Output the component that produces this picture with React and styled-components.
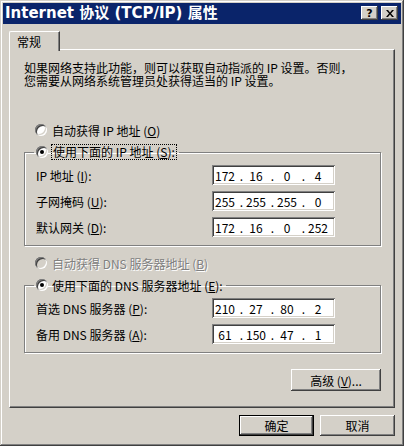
import styled, { createGlobalStyle } from "styled-components";

const GlobalStyle = createGlobalStyle`
    html, body {
        margin: 0;
        padding: 0;
        background: #D4D0C8;
    }
    body {
        font-family: "Noto Sans CJK SC", "Noto Sans", sans-serif;
        font-size: 12px;
        color: #000000;
    }
`

const ipRows = [
    { label: "IP 地址", key: "I", value: ["172", "16", "0", "4"] },
    { label: "子网掩码", key: "U", value: ["255", "255", "255", "0"] },
    { label: "默认网关", key: "D", value: ["172", "16", "0", "252"] },
]

const dnsRows = [
    { label: "首选 DNS 服务器", key: "P", value: ["210", "27", "80", "2"] },
    { label: "备用 DNS 服务器", key: "A", value: ["61", "150", "47", "1"] },
]

function IpField({ value }) {
    return (
        <IpBox>
            {value.map((part, i) => (
                <IpPart key={i}>
                    {i > 0 && <Dot>.</Dot>}
                    <Octet>{part}</Octet>
                </IpPart>
            ))}
        </IpBox>
    )
}

function FieldRows({ rows }) {
    return (
        <Rows>
            {rows.map((row) => (
                <Row key={row.key}>
                    <Label>{row.label} (<u>{row.key}</u>):</Label>
                    <IpField value={row.value} />
                </Row>
            ))}
        </Rows>
    )
}

export default function App() {
    return (
        <>
            <GlobalStyle />
            <Window>
                <TitleBar>
                    <Title>Internet 协议 (TCP/IP) 属性</Title>
                    <Caption>
                        <CapButton>?</CapButton>
                        <CapButton>
                            <svg width="8" height="7" viewBox="0 0 8 7">
                                <path d="M0 0h2l2 2.5L6 0h2L5 3.5 8 7H6L4 4.5 2 7H0l3-3.5z" fill="#000" />
                            </svg>
                        </CapButton>
                    </Caption>
                </TitleBar>

                <Body>
                    <Tabs>
                        <Tab>常规</Tab>
                    </Tabs>
                    <Panel>
                        <Intro>
                            <IntroLine>如果网络支持此功能，则可以获取自动指派的 IP 设置。否则，</IntroLine>
                            <IntroLine>您需要从网络系统管理员处获得适当的 IP 设置。</IntroLine>
                        </Intro>

                        <Option $top={35}>
                            <Radio />
                            <span>自动获得 IP 地址 (<u>O</u>)</span>
                        </Option>

                        <Group $top={6}>
                            <Legend>
                                <Radio $checked />
                                <Focus>使用下面的 IP 地址 (<u>S</u>):</Focus>
                            </Legend>
                            <FieldRows rows={ipRows} />
                        </Group>

                        <Option $top={9} $disabled>
                            <Radio $disabled />
                            <span>自动获得 DNS 服务器地址 (<u>B</u>)</span>
                        </Option>

                        <Group $top={6}>
                            <Legend>
                                <Radio $checked />
                                <span>使用下面的 DNS 服务器地址 (<u>E</u>):</span>
                            </Legend>
                            <FieldRows rows={dnsRows} />
                        </Group>

                        <AdvancedRow>
                            <Button $width={90} $height={22}>高级 (<u>V</u>)...</Button>
                        </AdvancedRow>
                    </Panel>

                    <Footer>
                        <Button $width={75} $height={21} $default>确定</Button>
                        <Button $width={75} $height={21}>取消</Button>
                    </Footer>
                </Body>
            </Window>
        </>
    )
}

const raised = `
    background: #D4D0C8;
    box-shadow: inset -1px -1px 0 #404040, inset 1px 1px 0 #FFFFFF,
        inset -2px -2px 0 #808080, inset 2px 2px 0 #D4D0C8;
`

const Window = styled.div`
    width: 404px;
    height: 446px;
    box-sizing: border-box;
    padding: 3px;
    background: #D4D0C8;
    box-shadow: inset -1px -1px 0 #404040, inset 1px 1px 0 #D4D0C8,
        inset -2px -2px 0 #808080, inset 2px 2px 0 #FFFFFF;
    display: flex;
    flex-direction: column;
`

const TitleBar = styled.div`
    height: 21px;
    background: #0A246A;
    display: flex;
    align-items: center;
    justify-content: space-between;
    padding: 0 3px 0 2px;
`

const Title = styled.div`
    font-family: "DejaVu Sans", "Noto Sans CJK SC", sans-serif;
    font-weight: bold;
    font-size: 15px;
    color: #FFFFFF;
    white-space: nowrap;
    line-height: 21px;
`

const Caption = styled.div`
    display: flex;
    gap: 3px;
    margin-top: -1px;
`

const CapButton = styled.div`
    ${raised}
    width: 17px;
    height: 14px;
    box-sizing: border-box;
    display: flex;
    align-items: center;
    justify-content: center;
    font-family: "DejaVu Sans", sans-serif;
    font-weight: bold;
    font-size: 11px;
    line-height: 1;
`

const Body = styled.div`
    flex: 1;
    padding: 7px 6px 0 6px;
    display: flex;
    flex-direction: column;
`

const Tabs = styled.div`
    display: flex;
    height: 19px;
    position: relative;
    z-index: 1;
    margin-bottom: -1px;
`

const Tab = styled.div`
    width: 51px;
    height: 20px;
    box-sizing: border-box;
    background: #D4D0C8;
    border-top: 1px solid #FFFFFF;
    border-left: 1px solid #FFFFFF;
    border-right: 1px solid #404040;
    box-shadow: inset -1px 0 0 #808080;
    border-top-left-radius: 2px;
    padding: 3px 0 0 7px;
    line-height: 14px;
`

const Panel = styled.div`
    height: 359px;
    box-sizing: border-box;
    border-top: 1px solid #FFFFFF;
    border-left: 1px solid #FFFFFF;
    border-right: 1px solid #404040;
    border-bottom: 1px solid #404040;
    box-shadow: inset -1px -1px 0 #808080;
    padding: 11px 13px 0 14px;
    display: flex;
    flex-direction: column;
`

const Intro = styled.div`
    display: flex;
    flex-direction: column;
`

const IntroLine = styled.div`
    height: 13px;
    line-height: 13px;
    white-space: nowrap;
`

const Option = styled.div`
    display: flex;
    align-items: center;
    gap: 5px;
    height: 16px;
    margin-top: ${(p) => p.$top}px;
    padding-left: 11px;
    color: ${(p) => (p.$disabled ? "#808080" : "#000000")};
    text-shadow: ${(p) => (p.$disabled ? "1px 1px 0 #FFFFFF" : "none")};
`

const Radio = styled.span`
    position: relative;
    flex: none;
    width: 12px;
    height: 12px;
    border-radius: 50%;
    background: ${(p) => (p.$disabled ? "#D4D0C8" : "#FFFFFF")};
    box-shadow: inset 1px 1px 0 #808080, inset -1px -1px 0 #FFFFFF,
        inset 2px 2px 0 #404040, inset -2px -2px 0 #D4D0C8;

    &::after {
        content: "";
        display: ${(p) => (p.$checked ? "block" : "none")};
        position: absolute;
        left: 4px;
        top: 4px;
        width: 4px;
        height: 4px;
        border-radius: 50%;
        background: #000000;
    }
`

const Group = styled.fieldset`
    margin: ${(p) => p.$top}px 0 0 0;
    padding: 0 0 8px 0;
    border: 1px solid #808080;
    box-shadow: 1px 1px 0 #FFFFFF, inset 1px 1px 0 #FFFFFF;
    min-width: 0;
`

const Legend = styled.legend`
    display: flex;
    align-items: center;
    gap: 4px;
    height: 16px;
    margin-left: 9px;
    padding: 0 3px 0 2px;
`

const Focus = styled.span`
    outline: 1px dotted #000000;
    outline-offset: 0;
    padding: 0 1px;
    line-height: 14px;
`

const Rows = styled.div`
    display: flex;
    flex-direction: column;
    gap: 6px;
    padding: 5px 0 0 11px;
`

const Row = styled.div`
    display: flex;
    align-items: center;
    height: 20px;
`

const Label = styled.div`
    width: 176px;
    white-space: nowrap;
`

const IpBox = styled.div`
    width: 123px;
    height: 20px;
    box-sizing: border-box;
    padding: 2px 4px 2px 2px;
    background: #FFFFFF;
    box-shadow: inset 1px 1px 0 #808080, inset -1px -1px 0 #FFFFFF,
        inset 2px 2px 0 #404040, inset -2px -2px 0 #D4D0C8;
    display: flex;
    align-items: center;
`

const IpPart = styled.div`
    display: flex;
    align-items: center;
`

const Dot = styled.span`
    width: 9px;
    text-align: right;
    padding-right: 2px;
    box-sizing: border-box;
`

const Octet = styled.span`
    width: 22px;
    text-align: center;
`

const AdvancedRow = styled.div`
    display: flex;
    justify-content: flex-end;
    margin-top: 16px;
`

const Button = styled.div`
    ${raised}
    width: ${(p) => p.$width}px;
    height: ${(p) => p.$height}px;
    box-sizing: border-box;
    display: flex;
    align-items: center;
    justify-content: center;
    border: ${(p) => (p.$default ? "1px solid #000000" : "none")};
    ${(p) => p.$default && "box-shadow: inset -1px -1px 0 #404040, inset 1px 1px 0 #FFFFFF, inset -2px -2px 0 #808080;"}
`

const Footer = styled.div`
    display: flex;
    justify-content: flex-end;
    gap: 6px;
    margin-top: 7px;
`
